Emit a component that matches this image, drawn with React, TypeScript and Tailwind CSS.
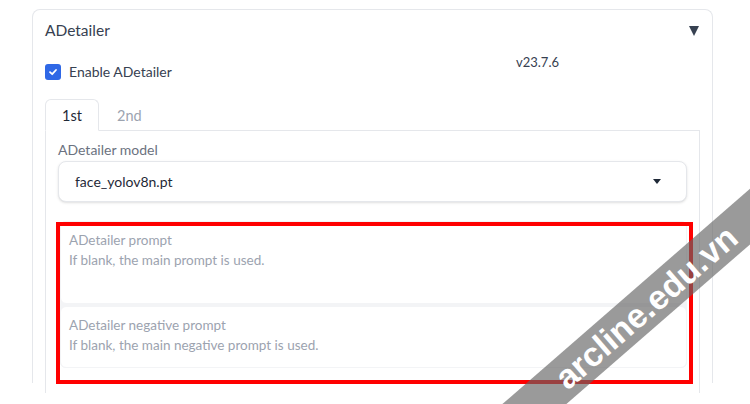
const font = { fontFamily: "Lato, 'Liberation Sans', sans-serif" };

function PromptBox({
  title,
  hint,
  height,
}: {
  title: string;
  hint: string;
  height: string;
}) {
  return (
    <div
      className={`${height} rounded-md border border-gray-100 bg-white px-2 pt-[8px] text-[13.5px] leading-5 text-[#9ca3af]`}
    >
      <p>{title}</p>
      <p>{hint}</p>
    </div>
  );
}

export default function App() {
  return (
    <div
      className="relative h-[404px] w-[750px] overflow-hidden bg-white"
      style={font}
    >
      <div className="pl-[32px] pt-[9px]">
        <div className="h-[374px] w-[681px] rounded-t-lg border-x border-t border-gray-200 bg-white">
          <div className="flex h-[41px] items-center justify-between pl-[12px] pr-[13px]">
            <span className="text-[15.5px] text-[#374151]">ADetailer</span>
            <svg width="10" height="10" viewBox="0 0 10 10">
              <polygon points="0,0 10,0 5,10" fill="#374151" />
            </svg>
          </div>

          <div className="mt-[3px] flex px-[12px]">
            <div className="w-[471px] pt-[8px]">
              <label className="flex items-center gap-2 text-[14px] leading-5 text-[#374151]">
                <span className="flex h-4 w-4 items-center justify-center rounded-[3px] bg-[#2f68e6]">
                  <svg width="10" height="10" viewBox="0 0 10 10">
                    <path
                      d="M2 5.2 L4.2 7.2 L8 3"
                      stroke="white"
                      strokeWidth="1.8"
                      fill="none"
                      strokeLinecap="round"
                      strokeLinejoin="round"
                    />
                  </svg>
                </span>
                Enable ADetailer
              </label>
            </div>
            <div className="text-[13px] leading-4 text-[#374151]">v23.7.6</div>
          </div>

          <div className="mt-[17px] px-[12px]">
            <div className="flex border-b border-gray-200">
              <div className="-mb-px flex h-[32px] w-[54px] items-center justify-center rounded-t-md border border-gray-200 border-b-white bg-white pt-[2px] text-[14.5px] text-[#1f2937]">
                1st
              </div>
              <div className="flex h-[31px] items-center pl-[18px] pt-[2px] text-[14.5px] text-[#9ca3af]">
                2nd
              </div>
            </div>
            <div className="h-[262px] border-x border-gray-200 px-3 pt-[9px]">
              <div className="text-[14px] leading-5 text-[#6b7280]">
                ADetailer model
              </div>
              <div className="mt-px flex h-[41px] items-center justify-between rounded-lg border border-gray-200 bg-white pl-[16px] pr-[25px] shadow-sm">
                <span className="text-[14px] text-[#1f2937]">face_yolov8n.pt</span>
                <svg width="8" height="5" viewBox="0 0 8 5">
                  <polygon points="0,0 8,0 4,5" fill="#1f2937" />
                </svg>
              </div>

              <div className="mt-[19px] ml-[2px] flex flex-col gap-[2px] rounded-md bg-gray-100">
                <PromptBox
                  title="ADetailer prompt"
                  hint="If blank, the main prompt is used."
                  height="h-[83px]"
                />
                <PromptBox
                  title="ADetailer negative prompt"
                  hint="If blank, the main negative prompt is used."
                  height="h-[62px]"
                />
              </div>
            </div>
          </div>
        </div>
      </div>

      {/* annotation */}
      <div className="absolute left-[56px] top-[222px] h-[162px] w-[637px] border-[4px] border-[#ff0000]" />

      {/* watermark */}
      <div
        className="absolute left-[436px] top-[286px] flex h-[42px] w-[420px] -rotate-[41deg] items-center justify-center bg-[rgba(100,100,100,0.65)] text-[34px] font-bold text-white"
        style={{ fontFamily: "'Liberation Sans', Arial, sans-serif" }}
      >
        arcline.edu.vn
      </div>
    </div>
  );
}
